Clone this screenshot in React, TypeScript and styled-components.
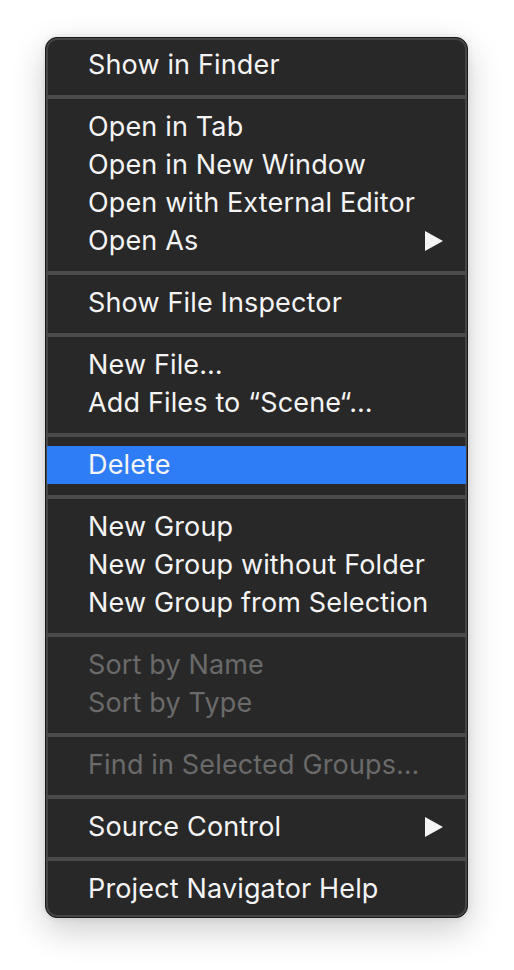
import React from "react";
import styled, { createGlobalStyle } from "styled-components";

const GlobalStyle = createGlobalStyle`
  html, body {
    margin: 0;
    background: #ffffff;
  }
  body {
    box-sizing: border-box;
    min-height: 100vh;
    padding: 37px 0 54px 45px;
    font-family: Inter, "Noto Sans", "Liberation Sans", sans-serif;
  }
`;

const Menu = styled.div`
  width: 423px;
  box-sizing: border-box;
  padding: 8px 0 9px;
  background: #282828;
  border: 1px solid #1c1c1c;
  border-radius: 12px;
  box-shadow: inset 0 0 0 2px #454545, 0 12px 34px rgba(0, 0, 0, 0.2),
    0 0 6px rgba(0, 0, 0, 0.1);
  display: flex;
  flex-direction: column;
`;

const Item = styled.div<{ $active?: boolean; $disabled?: boolean }>`
  height: 38px;
  display: flex;
  align-items: center;
  justify-content: space-between;
  padding: 0 23px 1px 41px;
  box-sizing: border-box;
  margin: 0 1px;
  font-size: 27px;
  letter-spacing: 0.15px;
  color: ${(p) => (p.$disabled ? "#6a6a6a" : "#f4f4f4")};
  background: ${(p) => (p.$active ? "#2f7df6" : "transparent")};
  white-space: nowrap;
`;

const Separator = styled.div`
  height: 24px;
  display: flex;
  align-items: flex-start;
  padding-top: 11px;
  box-sizing: border-box;
  &::after {
    content: "";
    display: block;
    width: 100%;
    height: 4px;
    background: #4b4b4b;
  }
`;

const Arrow = () => (
  <svg width="18" height="20" viewBox="0 0 18 20">
    <path d="M0 0 L18 10 L0 20 Z" fill="#f4f4f4" />
  </svg>
);

type Entry =
  | { label: string; disabled?: boolean; active?: boolean; sub?: boolean }
  | "sep";

const entries: Entry[] = [
  { label: "Show in Finder" },
  "sep",
  { label: "Open in Tab" },
  { label: "Open in New Window" },
  { label: "Open with External Editor" },
  { label: "Open As", sub: true },
  "sep",
  { label: "Show File Inspector" },
  "sep",
  { label: "New File…" },
  { label: "Add Files to “Scene“…" },
  "sep",
  { label: "Delete", active: true },
  "sep",
  { label: "New Group" },
  { label: "New Group without Folder" },
  { label: "New Group from Selection" },
  "sep",
  { label: "Sort by Name", disabled: true },
  { label: "Sort by Type", disabled: true },
  "sep",
  { label: "Find in Selected Groups…", disabled: true },
  "sep",
  { label: "Source Control", sub: true },
  "sep",
  { label: "Project Navigator Help" },
];

export default function App() {
  return (
    <>
      <GlobalStyle />
      <Menu>
        {entries.map((e, i) =>
          e === "sep" ? (
            <Separator key={i} />
          ) : (
            <Item key={i} $active={e.active} $disabled={e.disabled}>
              <span>{e.label}</span>
              {e.sub && <Arrow />}
            </Item>
          )
        )}
      </Menu>
    </>
  );
}
